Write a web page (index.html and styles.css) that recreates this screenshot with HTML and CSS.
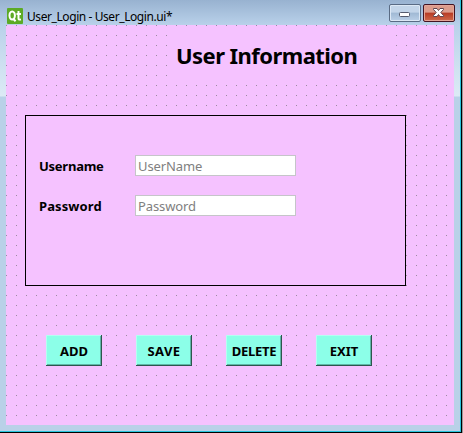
FILE: index.html
```html
<!DOCTYPE html>
<html lang="en">
<head>
<meta charset="utf-8">
<title>User_Login</title>
<link rel="stylesheet" href="styles.css">
</head>
<body>
<div class="window">
  <header class="titlebar">
    <svg class="logo" width="16" height="16" viewBox="0 0 16 16"><rect width="16" height="16" rx="1" fill="#5caa25"/><g fill="none" stroke="#fff" stroke-width="2"><ellipse cx="5.2" cy="7.5" rx="2.7" ry="4"/><path d="M6 10.5l2.6 2.8M11.500 3v7.500q0 1.500 2.500 1M9.500 6h4.500"/></g></svg>
    <span class="title">User_Login - User_Login.ui*</span>
    <span class="control"><svg width="30" height="16" viewBox="0 0 30 16"><rect x="9.500" y="7.500" width="10" height="4" rx="1" fill="#fff" stroke="#555b6e"/></svg></span>
    <span class="control close"><svg width="30" height="16" viewBox="0 0 30 16"><path d="M9.500 3.500h3.500l1.500 2 1.500-2h3.500v1l-2.700 3 2.700 3v1h-3.500l-1.500-2-1.500 2h-3.500v-1l2.700-3-2.700-3z" fill="#fff" stroke="#61464f"/></svg></span>
  </header>
  <main class="canvas">
    <h1 class="heading"><span>User Information</span></h1>
    <section class="frame">
      <label class="row"><span class="name user">Username</span><input class="field" placeholder="UserName"></label>
      <label class="row"><span class="name pass">Password</span><input class="field" placeholder="Password"></label>
    </section>
    <div class="buttons">
      <button class="add">ADD</button><button class="save">SAVE</button><button class="delete">DELETE</button><button class="exit">EXIT</button>
    </div>
  </main>
</div>
</body>
</html>
```
FILE: styles.css
```css
* { box-sizing: border-box; }
body { margin: 0; background: #999; font-family: "Noto Sans", sans-serif; overflow: hidden; }
.window {
  width: 462px; height: 433px; padding: 0 6px 6px;
  border-right: 1px solid #000; border-bottom: 1px solid #000;
  box-shadow: inset -1px -1px #28c4dc;
  background: linear-gradient(#98b2d0 0, #b9d1ea 25px, #d0e2f1 70px, #dceaf5 96px, #b9d1e8 97px);
}
.titlebar { height: 25px; display: flex; align-items: flex-start; width: 449px; }
.logo { margin: 8px 4px 0 1px; }
.title { flex: 1; font: 12px/16px "Noto Sans", sans-serif; padding-top: 9px; letter-spacing: -.42px; white-space: nowrap; color: #000; }
.control { width: 32px; height: 18px; margin: 4px 0 0 2px; border: 1px solid #596b84; border-radius: 2px; box-shadow: inset 0 0 0 1px #dce8f5; background: linear-gradient(#c3d5e9 45%, #a0b9d4 50%, #bbd0e7); }
.control svg { display: block; }
.control.close { border-color: #431422; box-shadow: inset 0 0 0 1px #e3a598; background: linear-gradient(#dc9c8c 45%, #b83b24 50%, #cf6a4b); }
.canvas {
  width: 448px; height: 400px; padding: 6px 0 0 19px;
  background: conic-gradient(from 270deg at 1px 1px, #9b8ba0 90deg, transparent 0) 0 0 / 10px 10px, #f5c2ff;
}
.heading { margin: 0 0 0 145px; width: 221px; height: 51px; padding-left: 6px; background: #f5c2ff; font: bold 22px/48px "Noto Sans", sans-serif; letter-spacing: -.55px; white-space: nowrap; }
.frame { width: 381px; height: 171px; margin-top: 33px; border: 1px solid #000; background: #f5c2ff; padding: 39px 0 0 13px; display: flex; flex-direction: column; gap: 19px; }
.row { display: flex; height: 21px; align-items: center; }
.name { width: 96px; font: bold 13px/21px "Noto Sans", sans-serif; padding-top: 1px; }
.user { letter-spacing: -.25px; }
.pass { letter-spacing: .1px; }
.field { width: 161px; height: 21px; border: 1px solid #c5c5c9; padding: 1px 2px 0; background: #fff; font: 13px "Noto Sans", sans-serif; letter-spacing: -.12px; }
.field::placeholder { color: #808080; opacity: 1; }
.buttons { display: flex; gap: 34px; margin: 49px 0 0 21px; }
button { width: 56px; height: 31px; padding: 1px 0 0; border: 0; background: #8cffe8; box-shadow: inset -1px -1px #2e554e, inset 1px 1px #b4fff1, inset -2px -2px #5eb7a7; font: bold 13px "Noto Sans", sans-serif; color: #000; white-space: nowrap; }
.save { letter-spacing: .4px; }
.delete { letter-spacing: -.3px; }
```
